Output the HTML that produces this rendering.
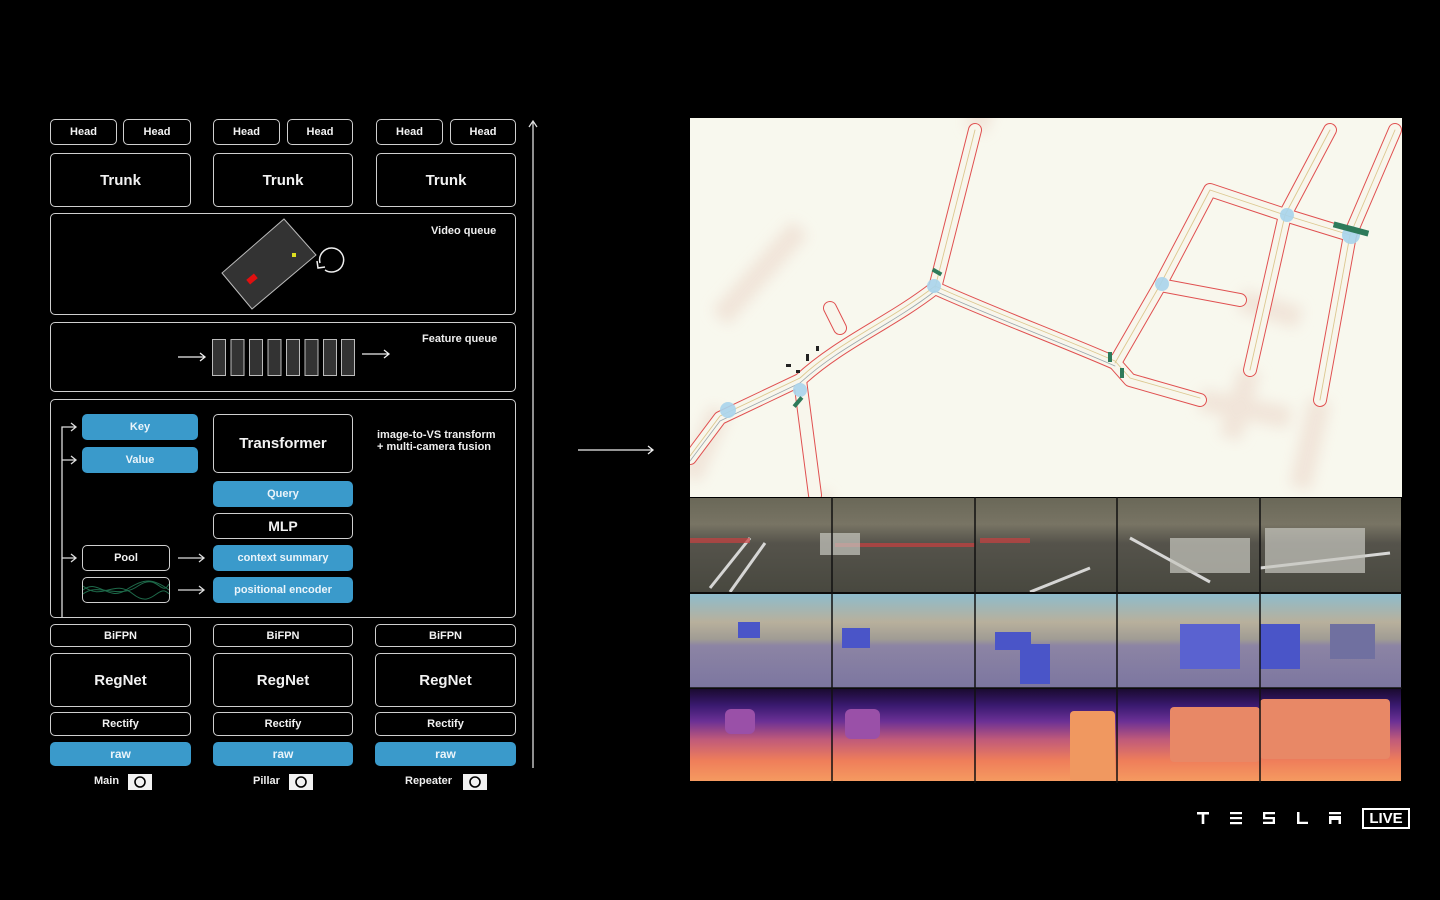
<!DOCTYPE html>
<html><head><meta charset="utf-8"><style>
*{margin:0;padding:0;box-sizing:border-box}
body{width:1440px;height:900px;background:#000;position:relative;overflow:hidden;font-family:"Liberation Sans",sans-serif;color:#fff}
.b{position:absolute;border:1.5px solid #cfcfcf;border-radius:5px;display:flex;align-items:center;justify-content:center;font-weight:bold;color:#f2f2f2}
.blue{background:#3a9acb;border-color:#3a9acb;color:#eaf4fa}
.s{font-size:11px}.m{font-size:12px}.l{font-size:15px}
.t{position:absolute;font-size:11px;font-weight:bold;color:#eee;line-height:12px}
.cell{position:absolute;overflow:hidden}
</style></head><body>
<div class="b s" style="left:50px;top:119px;width:67px;height:26px">Head</div>
<div class="b s" style="left:123px;top:119px;width:68px;height:26px">Head</div>
<div class="b s" style="left:213px;top:119px;width:67px;height:26px">Head</div>
<div class="b s" style="left:287px;top:119px;width:66px;height:26px">Head</div>
<div class="b s" style="left:376px;top:119px;width:67px;height:26px">Head</div>
<div class="b s" style="left:450px;top:119px;width:66px;height:26px">Head</div>
<div class="b l" style="left:50px;top:153px;width:141px;height:54px">Trunk</div>
<div class="b l" style="left:213px;top:153px;width:140px;height:54px">Trunk</div>
<div class="b l" style="left:376px;top:153px;width:140px;height:54px">Trunk</div>
<div class="b" style="left:50px;top:213px;width:466px;height:102px"></div>
<div class="t" style="left:431px;top:225px">Video queue</div>
<svg style="position:absolute;left:200px;top:213px" width="160" height="100">
<polygon points="84,6 116,42 52,96 22,60" fill="#333" stroke="#bbb" stroke-width="1"/>
<rect x="47" y="63" width="10" height="6" fill="#e01010" transform="rotate(-40 52 66)"/>
<rect x="92" y="40" width="4" height="4" fill="#dde020"/>
<path d="M120,50 A12,12 0 1 1 125,57" fill="none" stroke="#eee" stroke-width="1.5"/>
<path d="M117,48 L118,55 L125,54" fill="none" stroke="#eee" stroke-width="1.5"/>
</svg>
<div class="b" style="left:50px;top:322px;width:466px;height:70px"></div>
<div class="t" style="left:422px;top:333px">Feature queue</div>
<svg style="position:absolute;left:170px;top:330px" width="230" height="60">
<path d="M8,27 H34 M30,23 L35,27 L30,31" stroke="#eee" stroke-width="1.3" fill="none"/>
<g fill="#333" stroke="#bbb" stroke-width="1"><rect x="42.5" y="9.5" width="13" height="36"/><rect x="61" y="9.5" width="13" height="36"/><rect x="79.5" y="9.5" width="13" height="36"/><rect x="98" y="9.5" width="13" height="36"/><rect x="116.5" y="9.5" width="13" height="36"/><rect x="135" y="9.5" width="13" height="36"/><rect x="153.5" y="9.5" width="13" height="36"/><rect x="171.5" y="9.5" width="13" height="36"/></g>
<path d="M192,24 H218 M214,20 L219,24 L214,28" stroke="#eee" stroke-width="1.3" fill="none"/>
</svg>
<div class="b" style="left:50px;top:399px;width:466px;height:219px"></div>
<div class="b blue s" style="left:82px;top:414px;width:116px;height:26px">Key</div>
<div class="b blue s" style="left:82px;top:447px;width:116px;height:26px">Value</div>
<div class="b l" style="left:213px;top:414px;width:140px;height:59px">Transformer</div>
<div class="t" style="left:377px;top:429px">image-to-VS transform<br>+ multi-camera fusion</div>
<div class="b blue s" style="left:213px;top:481px;width:140px;height:26px">Query</div>
<div class="b" style="left:213px;top:513px;width:140px;height:26px;font-size:14px">MLP</div>
<div class="b blue s" style="left:213px;top:545px;width:140px;height:26px">context summary</div>
<div class="b blue s" style="left:213px;top:577px;width:140px;height:26px">positional encoder</div>
<div class="b s" style="left:82px;top:545px;width:88px;height:26px">Pool</div>
<div class="b" style="left:82px;top:577px;width:88px;height:26px;overflow:hidden">
<svg width="86" height="24"><g fill="none" stroke="#1e6a4a" stroke-width="1"><path d="M0,12 C15,0 25,24 43,12 S70,0 86,12"/><path d="M0,8 C20,24 30,0 50,16 S75,4 86,16"/><path d="M0,16 C15,4 35,22 55,8 S78,20 86,6"/></g></svg></div>
<svg style="position:absolute;left:55px;top:420px" width="160" height="200">
<g stroke="#ddd" stroke-width="1.3" fill="none">
<path d="M7,197 V7 H20 M16,3 L21,7 L16,11"/>
<path d="M7,40 H20 M16,36 L21,40 L16,44"/>
<path d="M7,138 H20 M16,134 L21,138 L16,142"/>
<path d="M123,138 H148 M144,134 L149,138 L144,142"/>
<path d="M123,170 H148 M144,166 L149,170 L144,174"/>
</g></svg>
<div class="b s" style="left:50px;top:624px;width:141px;height:23px">BiFPN</div>
<div class="b s" style="left:213px;top:624px;width:140px;height:23px">BiFPN</div>
<div class="b s" style="left:375px;top:624px;width:141px;height:23px">BiFPN</div>
<div class="b l" style="left:50px;top:653px;width:141px;height:54px">RegNet</div>
<div class="b l" style="left:213px;top:653px;width:140px;height:54px">RegNet</div>
<div class="b l" style="left:375px;top:653px;width:141px;height:54px">RegNet</div>
<div class="b s" style="left:50px;top:712px;width:141px;height:24px">Rectify</div>
<div class="b s" style="left:213px;top:712px;width:140px;height:24px">Rectify</div>
<div class="b s" style="left:375px;top:712px;width:141px;height:24px">Rectify</div>
<div class="b blue m" style="left:50px;top:742px;width:141px;height:24px">raw</div>
<div class="b blue m" style="left:213px;top:742px;width:140px;height:24px">raw</div>
<div class="b blue m" style="left:375px;top:742px;width:141px;height:24px">raw</div>
<div class="t" style="left:94px;top:775px">Main</div>
<div class="t" style="left:253px;top:775px">Pillar</div>
<div class="t" style="left:405px;top:775px">Repeater</div>
<svg style="position:absolute;left:128px;top:772px" width="25" height="18"><rect y="2" width="24" height="16" fill="#f2f2f2"/><circle cx="12" cy="10" r="5" fill="none" stroke="#000" stroke-width="1.6"/></svg>
<svg style="position:absolute;left:289px;top:772px" width="25" height="18"><rect y="2" width="24" height="16" fill="#f2f2f2"/><circle cx="12" cy="10" r="5" fill="none" stroke="#000" stroke-width="1.6"/></svg>
<svg style="position:absolute;left:463px;top:772px" width="25" height="18"><rect y="2" width="24" height="16" fill="#f2f2f2"/><circle cx="12" cy="10" r="5" fill="none" stroke="#000" stroke-width="1.6"/></svg>
<svg style="position:absolute;left:526px;top:118px" width="14" height="652"><path d="M7,650 V3 M3,9 L7,3 L11,9" stroke="#ddd" stroke-width="1.3" fill="none"/></svg>
<svg style="position:absolute;left:576px;top:443px" width="82" height="14"><path d="M2,7 H77 M72,3 L77,7 L72,11" stroke="#eee" stroke-width="1.3" fill="none"/></svg>
<!-- map -->
<svg style="position:absolute;left:690px;top:118px" width="712" height="379">
<defs><filter id="bl"><feGaussianBlur stdDeviation="7"/></filter></defs>
<rect width="712" height="379" fill="#f8f8ee"/>
<g filter="url(#bl)" stroke="#efe0d4" fill="none" stroke-width="22" opacity=".8">
<path d="M30,200 L110,110"/><path d="M285,12 L300,-30"/><path d="M560,252 L540,320"/><path d="M630,282 L610,370"/><path d="M550,182 L610,200"/><path d="M510,282 L600,300"/><path d="M125,377 L140,400"/><path d="M0,360 L30,292"/>
</g>
<g fill="none" stroke-linecap="round" stroke-linejoin="round">
<g stroke="#e05050" stroke-width="14">
<path d="M0,340 L30,300 L110,262 C150,225 200,205 245,170 C300,195 380,225 425,245 L440,262 L510,282"/>
<path d="M245,170 L285,12"/><path d="M110,262 L125,377"/><path d="M150,210 L140,190"/>
<path d="M425,245 L470,167 L520,72 L595,97 L660,117"/>
<path d="M470,167 L550,182"/><path d="M640,12 L595,97 L560,252"/><path d="M705,12 L660,117 L630,282"/>
</g>
<g stroke="#f8f6ec" stroke-width="12">
<path d="M0,340 L30,300 L110,262 C150,225 200,205 245,170 C300,195 380,225 425,245 L440,262 L510,282"/>
<path d="M245,170 L285,12"/><path d="M110,262 L125,377"/><path d="M150,210 L140,190"/>
<path d="M425,245 L470,167 L520,72 L595,97 L660,117"/>
<path d="M470,167 L550,182"/><path d="M640,12 L595,97 L560,252"/><path d="M705,12 L660,117 L630,282"/>
</g>
<g stroke="#dcc890" stroke-width="0.9">
<path d="M0,338 L30,298 L110,260 C150,223 200,203 245,168 C300,193 380,223 425,243 L440,260 L510,280"/>
<path d="M245,170 L285,12"/><path d="M425,245 L470,167 L520,72 L595,97 L660,117"/><path d="M640,12 L595,97 L560,252"/><path d="M705,12 L660,117 L630,282"/>
</g>
<g stroke="#9aa6ac" stroke-width="0.8">
<path d="M0,343 L30,303 L110,265 C150,228 200,208 245,173 C300,198 380,228 425,248"/>
</g>
</g>
<g fill="#a8d4ec" opacity=".9"><circle cx="244" cy="168" r="7"/><circle cx="110" cy="272" r="7"/><circle cx="38" cy="292" r="8"/><circle cx="472" cy="166" r="7"/><circle cx="597" cy="97" r="7"/><circle cx="661" cy="117" r="9"/></g>
<g fill="#2e7a5a"><rect x="242" y="152" width="10" height="4" transform="rotate(30 247 154)"/><rect x="102" y="282" width="12" height="4" transform="rotate(-50 108 284)"/><rect x="643" y="108" width="36" height="6" transform="rotate(15 661 111)"/><rect x="418" y="234" width="4" height="10"/><rect x="430" y="250" width="4" height="10"/></g>
<g fill="#222"><rect x="116" y="236" width="3" height="7"/><rect x="96" y="246" width="5" height="3"/><rect x="106" y="252" width="4" height="3"/><rect x="126" y="228" width="3" height="5"/></g>
</svg>
<!-- cameras -->
<div class="cell" style="left:690px;top:498px;width:711px;height:94px;background:linear-gradient(#6a6858 0%,#787464 28%,#55534b 48%,#48483f 100%)">
<svg width="711" height="94"><g stroke="#eee" stroke-width="3" fill="none" opacity=".85"><path d="M20,90 L60,40"/><path d="M40,94 L75,45"/><path d="M340,94 L400,70"/><path d="M440,40 L520,84"/><path d="M570,70 L700,55"/></g><g fill="#c84040" opacity=".7"><rect x="0" y="40" width="60" height="5"/><rect x="145" y="45" width="140" height="4"/><rect x="290" y="40" width="50" height="5"/></g><g fill="#c8c8c0" opacity=".7"><rect x="480" y="40" width="80" height="35"/><rect x="575" y="30" width="100" height="45"/><rect x="130" y="35" width="40" height="22"/></g></svg></div>
<div class="cell" style="left:690px;top:594px;width:711px;height:94px;background:linear-gradient(#8ebccc 0%,#b8b09c 30%,#a09c94 48%,#8c84a4 55%,#7c76a0 100%)">
<div style="position:absolute;left:48px;top:28px;width:22px;height:16px;background:#4a55c8"></div><div style="position:absolute;left:152px;top:34px;width:28px;height:20px;background:#4a55c8"></div><div style="position:absolute;left:305px;top:38px;width:36px;height:18px;background:#4a55c8"></div><div style="position:absolute;left:330px;top:50px;width:30px;height:40px;background:#4a55c8"></div><div style="position:absolute;left:490px;top:30px;width:60px;height:45px;background:#5a62d0"></div><div style="position:absolute;left:570px;top:30px;width:40px;height:45px;background:#4a55c8"></div><div style="position:absolute;left:640px;top:30px;width:45px;height:35px;background:#7070a0"></div></div>
<div class="cell" style="left:690px;top:689px;width:711px;height:92px;background:linear-gradient(#1a0a30 0%,#3a1a70 18%,#6a3095 35%,#c05a7a 55%,#ef7e5a 78%,#f59a60 100%)">
<div style="position:absolute;left:35px;top:20px;width:30px;height:25px;background:#9a50a8;border-radius:6px"></div><div style="position:absolute;left:155px;top:20px;width:35px;height:30px;background:#9a50a8;border-radius:6px"></div><div style="position:absolute;left:380px;top:22px;width:45px;height:70px;background:#f09860;border-radius:4px"></div><div style="position:absolute;left:480px;top:18px;width:90px;height:55px;background:#e88866;border-radius:4px"></div><div style="position:absolute;left:570px;top:10px;width:130px;height:60px;background:#e88866;border-radius:4px"></div></div>
<svg style="position:absolute;left:690px;top:497px" width="712" height="286"><g stroke="#111" stroke-width="1.5"><path d="M142,0V286M285,0V286M427,0V286M570,0V286M0,96H712M0,191H712"/></g></svg>
<!-- logo -->
<svg style="position:absolute;left:1195px;top:810px" width="150" height="18"><g fill="#fff">
<rect x="2" y="2" width="12" height="2.5"/><rect x="6.7" y="4" width="2.6" height="10"/>
<rect x="35" y="2" width="12" height="2.2"/><rect x="35" y="7" width="12" height="2.2"/><rect x="35" y="12" width="12" height="2.2"/>
<path d="M68,2 H80 V4.2 H70.3 V7 H80 V14 H68 V11.8 H77.7 V9.2 H68 Z"/>
<path d="M102,2 H104.5 V11.8 H113 V14 H102 Z"/>
<path d="M134,2 H146 V4.2 H134 Z M134,6 H146 V14 H143.5 V10 H136.5 V14 H134 Z"/>
</g></svg>
<div style="position:absolute;left:1362px;top:808px;width:48px;height:21px;border:2px solid #fff;font-size:15px;font-weight:bold;text-align:center;line-height:17px">LIVE</div>
</body></html>
